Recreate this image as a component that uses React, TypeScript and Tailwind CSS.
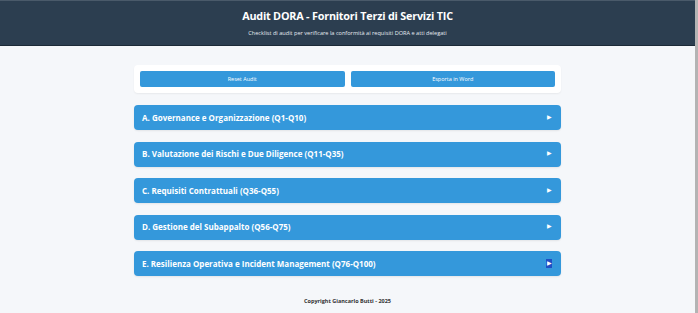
import React from "react";

const sections = [
  "A. Governance e Organizzazione (Q1-Q10)",
  "B. Valutazione dei Rischi e Due Diligence (Q11-Q35)",
  "C. Requisiti Contrattuali (Q36-Q55)",
  "D. Gestione del Subappalto (Q56-Q75)",
  "E. Resilienza Operativa e Incident Management (Q76-Q100)",
];

export default function App() {
  return (
    <div
      className="flex h-[313px] w-[698px] overflow-hidden bg-[#f5f7fa]"
      style={{ fontFamily: '"Open Sans", "Noto Sans", sans-serif' }}
    >
      <div className="flex w-[695px] flex-col">
        <header className="flex h-[46px] flex-col items-center justify-center border-b border-[#1c2a37] border-t border-t-[#4a5a6a] bg-[#2c3e50] pt-[2px] text-white">
          <h1 className="text-[10.8px] font-bold leading-none tracking-[-0.2px]">
            Audit DORA - Fornitori Terzi di Servizi TIC
          </h1>
          <p className="mt-[9px] text-[5.6px] leading-none text-[#e6ebf0]">
            Checklist di audit per verificare la conformità ai requisiti DORA e atti delegati
          </p>
        </header>

        <div className="mx-auto mt-[19px] flex w-[427px] flex-col">
          <div className="flex h-[28px] items-center gap-[6px] rounded-[4px] bg-white px-[6px] shadow-[0_1px_2px_rgba(0,0,0,0.06)]">
            <button className="flex h-[16px] flex-1 items-center justify-center rounded-[2px] bg-[#3498db] text-[5.5px] text-white">
              Reset Audit
            </button>
            <button className="flex h-[16px] flex-1 items-center justify-center rounded-[2px] bg-[#3498db] text-[5.5px] text-white">
              Esporta in Word
            </button>
          </div>

          <div className="mt-[12px] flex flex-col gap-[11.5px]">
            {sections.map((s, i) => (
              <div
                key={s}
                className="flex h-[25px] items-center justify-between rounded-[4px] bg-[#3498db] pl-[8px] pr-[9px] text-white shadow-[0_1px_2px_rgba(0,0,0,0.08)]"
              >
                <span className="text-[8px] font-bold leading-none">{s}</span>
                {i === 4 ? (
                  <span className="flex h-[9px] w-[6px] items-center justify-center bg-[#1f4fc4] text-[5.5px] leading-none">
                    ▶
                  </span>
                ) : (
                  <span className="text-[5.5px] leading-none">▶</span>
                )}
              </div>
            ))}
          </div>

          <div className="mt-[23px] text-center text-[5.5px] font-bold leading-none text-[#333]">
            Copyright Giancarlo Butti - 2025
          </div>
        </div>
      </div>
      <div className="h-full w-[3px] bg-[#b4b4b4]" />
    </div>
  );
}
